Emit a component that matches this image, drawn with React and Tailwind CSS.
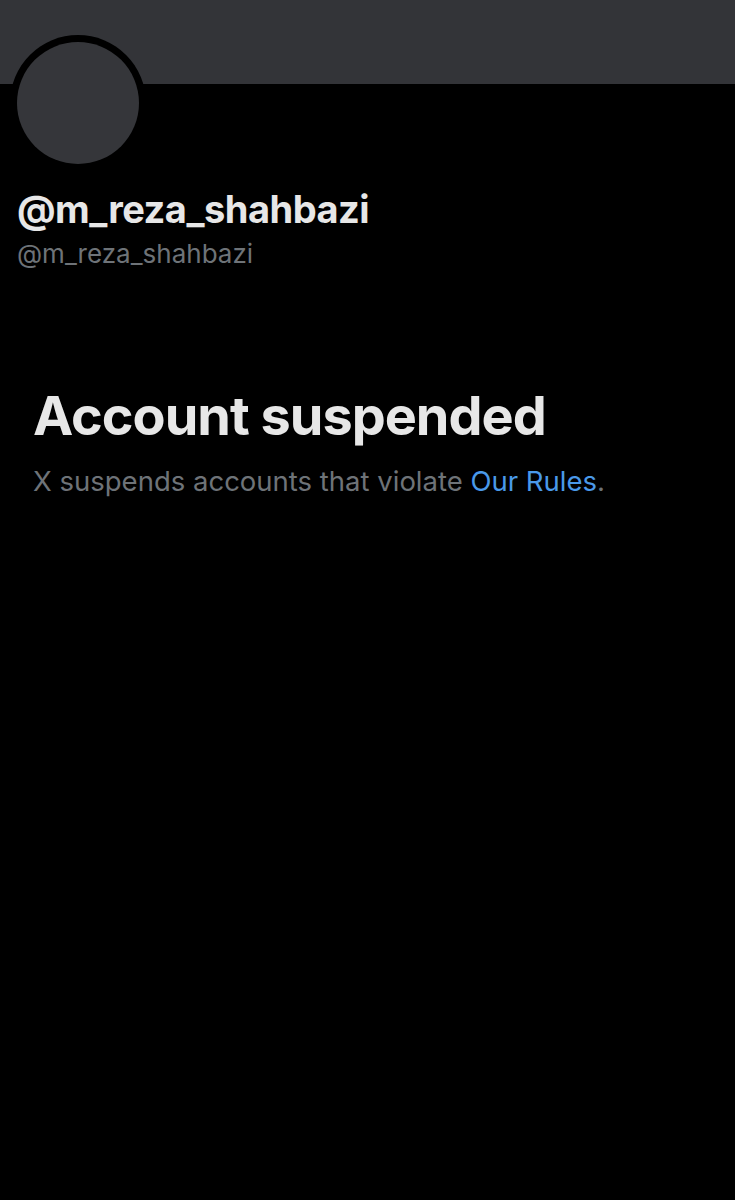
export default function App() {
  return (
    <div className="w-[735px] h-[1200px] bg-black overflow-hidden" style={{ fontFamily: 'Inter, "Liberation Sans", sans-serif' }}>
      <div className="h-[84px] bg-[#333438]" />
      <div className="px-[10px] -mt-[49px]">
        <div className="w-[136px] h-[136px] rounded-full bg-black p-[7px]">
          <div className="w-full h-full rounded-full bg-[#35363a]" />
        </div>
      </div>
      <div className="px-[17px] mt-[14px]">
        <div className="text-[38px] leading-[48px] font-bold text-[#e7e7e7] tracking-[-0.5px]">@m_reza_shahbazi</div>
        <div className="text-[26px] leading-[30px] text-[#6e7378] mt-[6px]">@m_reza_shahbazi</div>
      </div>
      <div className="px-[33px] mt-[115px]">
        <div className="text-[54px] leading-[64px] font-bold text-[#e7e7e7] tracking-[-1px]">Account suspended</div>
        <div className="text-[27.5px] leading-[34px] text-[#6e7378] mt-[16px]">
          X suspends accounts that violate <span className="text-[#4a99e9]">Our Rules</span>.
        </div>
      </div>
    </div>
  );
}
